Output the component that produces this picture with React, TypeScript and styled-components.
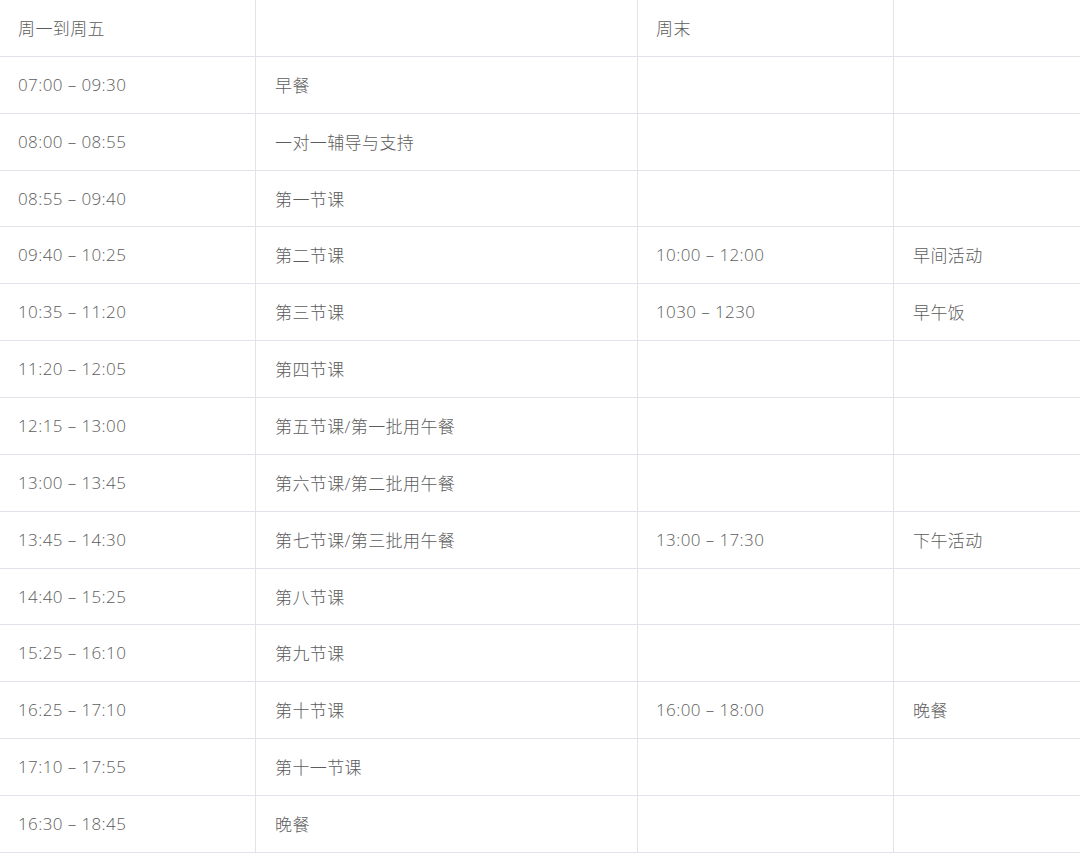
import styled, { createGlobalStyle } from 'styled-components';

const GlobalStyle = createGlobalStyle`
  html, body {
    margin: 0;
    padding: 0;
    background: #ffffff;
  }
  body {
    font-family: "Open Sans", "Noto Sans CJK SC", sans-serif;
    overflow: hidden;
  }
`;

const Table = styled.div`
  display: grid;
  grid-template-columns: 256px 382px 256px 1fr;
  grid-auto-rows: 56.86px;
  width: 1080px;
`;

const Cell = styled.div<{ last?: boolean }>`
  box-sizing: border-box;
  display: flex;
  align-items: center;
  padding-left: ${({ last }) => (last ? '19px' : '18px')};
  border-bottom: 1px solid #e0e4ea;
  border-right: ${({ last }) => (last ? 'none' : '1px solid #e0e4ea')};
  font-size: 17px;
  font-weight: 300;
  letter-spacing: 0.4px;
  color: #5c5c5c;
  white-space: nowrap;
`;

const Inner = styled.span<{ shift: number }>`
  margin-left: ${({ shift }) => shift}px;
  padding-bottom: 1px;
`;

type Row = [string, string, string, string];

const rows: Row[] = [
  ['周一到周五', '', '周末', ''],
  ['07:00 – 09:30', '早餐', '', ''],
  ['08:00 – 08:55', '一对一辅导与支持', '', ''],
  ['08:55 – 09:40', '第一节课', '', ''],
  ['09:40 – 10:25', '第二节课', '10:00 – 12:00', '早间活动'],
  ['10:35 – 11:20', '第三节课', '1030 – 1230', '早午饭'],
  ['11:20 – 12:05', '第四节课', '', ''],
  ['12:15 – 13:00', '第五节课/第一批用午餐', '', ''],
  ['13:00 – 13:45', '第六节课/第二批用午餐', '', ''],
  ['13:45 – 14:30', '第七节课/第三批用午餐', '13:00 – 17:30', '下午活动'],
  ['14:40 – 15:25', '第八节课', '', ''],
  ['15:25 – 16:10', '第九节课', '', ''],
  ['16:25 – 17:10', '第十节课', '16:00 – 18:00', '晚餐'],
  ['17:10 – 17:55', '第十一节课', '', ''],
  ['16:30 – 18:45', '晚餐', '', ''],
];

const shifts = [0, 1, 0, 0];

const App = () => (
  <>
    <GlobalStyle />
    <Table>
      {rows.map((row, r) =>
        row.map((text, c) => (
          <Cell key={`${r}-${c}`} last={c === 3}>
            <Inner shift={shifts[c]}>{text}</Inner>
          </Cell>
        )),
      )}
    </Table>
  </>
);

export default App;
